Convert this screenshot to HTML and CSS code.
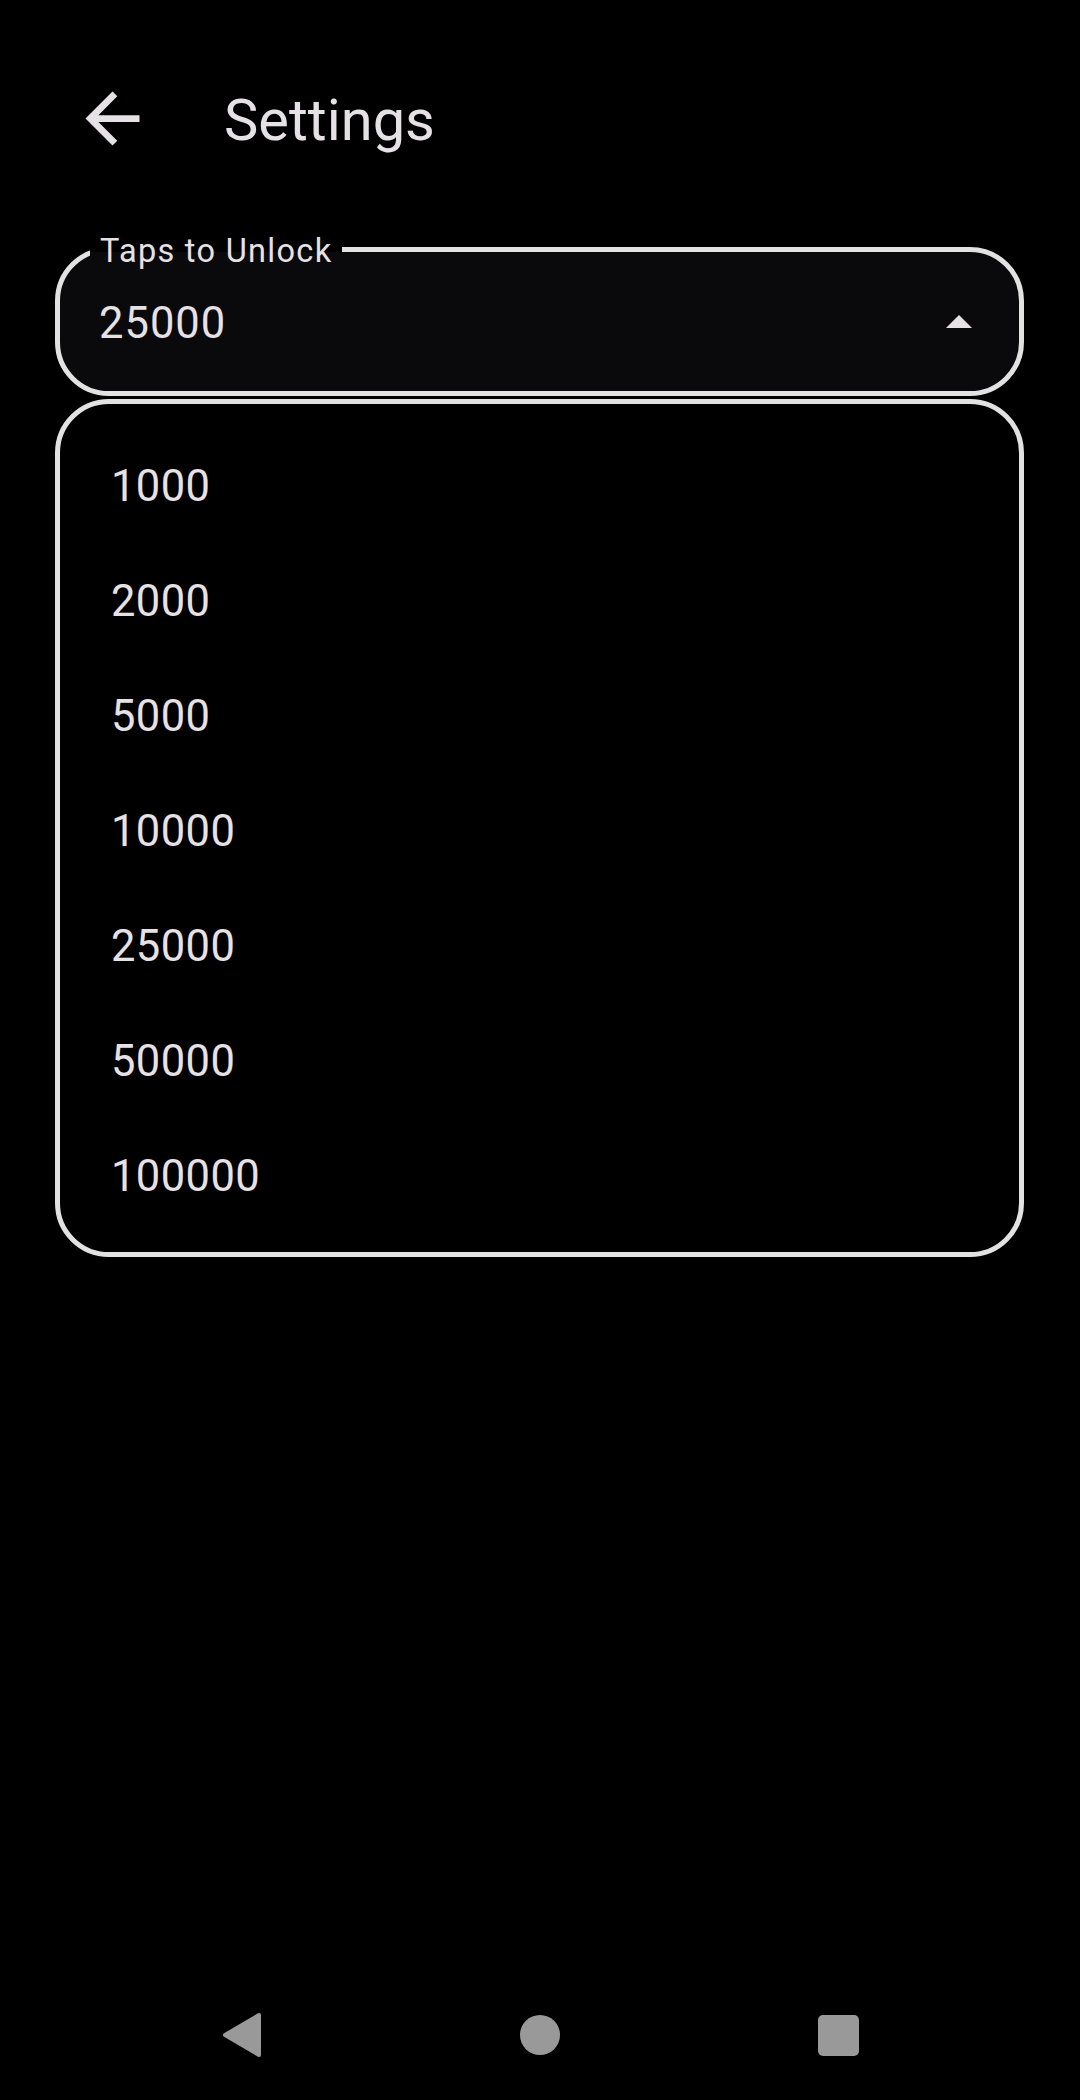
FILE: index.html
```html
<!DOCTYPE html>
<html lang="en">
<head>
  <meta charset="UTF-8">
  <meta name="viewport" content="width=device-width, initial-scale=1.0">
  <title>Settings</title>
  <link rel="stylesheet" href="styles.css">
</head>
<body>
  <div class="topbar">
    <svg class="back" viewBox="0 0 24 24" width="81" height="81">
      <path d="M20 11H7.83l5.59-5.59L12 4l-8 8 8 8 1.41-1.41L7.83 13H20v-2z" fill="#e6e1e5"/>
    </svg>
    <p class="title">Settings</p>
  </div>

  <div class="field">
    <span class="field-label">Taps to Unlock</span>
    <p class="field-value">25000</p>
    <svg class="drop" viewBox="0 0 26 13" width="26" height="13">
      <polygon points="0,13 13,0 26,13" fill="#e6e1e5"/>
    </svg>
  </div>

  <ul class="menu">
    <li class="menu-item">1000</li>
    <li class="menu-item">2000</li>
    <li class="menu-item">5000</li>
    <li class="menu-item">10000</li>
    <li class="menu-item">25000</li>
    <li class="menu-item">50000</li>
    <li class="menu-item">100000</li>
  </ul>

  <div class="navbar">
    <div class="nav-slot">
      <svg viewBox="0 0 40 46" width="40" height="46">
        <polygon points="37,3 37,43 3,23" fill="#999" stroke="#999" stroke-width="4" stroke-linejoin="round"/>
      </svg>
    </div>
    <div class="nav-slot">
      <span class="nav-home"></span>
    </div>
    <div class="nav-slot">
      <span class="nav-recent"></span>
    </div>
  </div>
</body>
</html>
```

FILE: styles.css
```css
    body {
      margin: 0;
      padding: 0;
      min-height: 2100px;
      background-color: #000000;
      font-family: Roboto, "Noto Sans", sans-serif;
      color: #e6e1e5;

      display: flex;
      flex-direction: column;
    }
    p {
      margin: 0;
      padding: 0;
    }
    .topbar {
      height: 160px;
      margin-top: 38px;
      padding-left: 72px;
      display: flex;
      flex-direction: row;
      align-items: center;
    }
    .back {
      display: block;
      flex-shrink: 0;
    }
    .title {
      margin-left: 71px;
      margin-top: 6px;
      font-size: 57.75px;
      line-height: 1;
    }

    .field {
      position: relative;
      box-sizing: border-box;
      height: 149px;
      margin: 49px 56px 0 55px;
      padding: 0 47px 0 39px;
      border: 5px solid #e2e2e2;
      border-radius: 54px;
      background-color: #0a0a0d;

      display: flex;
      flex-direction: row;
      align-items: center;
      justify-content: space-between;
    }
    .field-label {
      position: absolute;
      top: -17px;
      left: 30px;
      padding: 0 10px;
      font-size: 32.5px;
      letter-spacing: 1.3px;
      line-height: 1;
      background: linear-gradient(#000000 50%, #0a0a0d 50%);
    }
    .field-value {
      margin-top: 5px;
      font-size: 43.5px;
      letter-spacing: 1px;
      line-height: 1;
    }
    .drop {
      display: block;
    }

    .menu {
      list-style: none;
      box-sizing: border-box;
      height: 858px;
      margin: 3px 56px 0 55px;
      padding: 25px 0 18px 0;
      border: 5px solid #e2e2e2;
      border-radius: 54px;
      background-color: #000000;
    }
    .menu-item {
      height: 115px;
      padding-left: 51px;
      font-size: 43.5px;
      letter-spacing: 0.4px;
      line-height: 115px;
    }

    .navbar {
      margin-top: auto;
      height: 130px;
      display: flex;
      flex-direction: row;
      justify-content: center;
      align-items: center;
      gap: 238px;
    }
    .nav-slot {
      width: 60px;
      display: flex;
      justify-content: center;
      align-items: center;
    }
    .nav-slot svg {
      display: block;
    }
    .nav-home {
      display: block;
      width: 40px;
      height: 40px;
      border-radius: 50%;
      background-color: #999999;
    }
    .nav-recent {
      display: block;
      width: 41px;
      height: 41px;
      border-radius: 5px;
      background-color: #999999;
    }
```
